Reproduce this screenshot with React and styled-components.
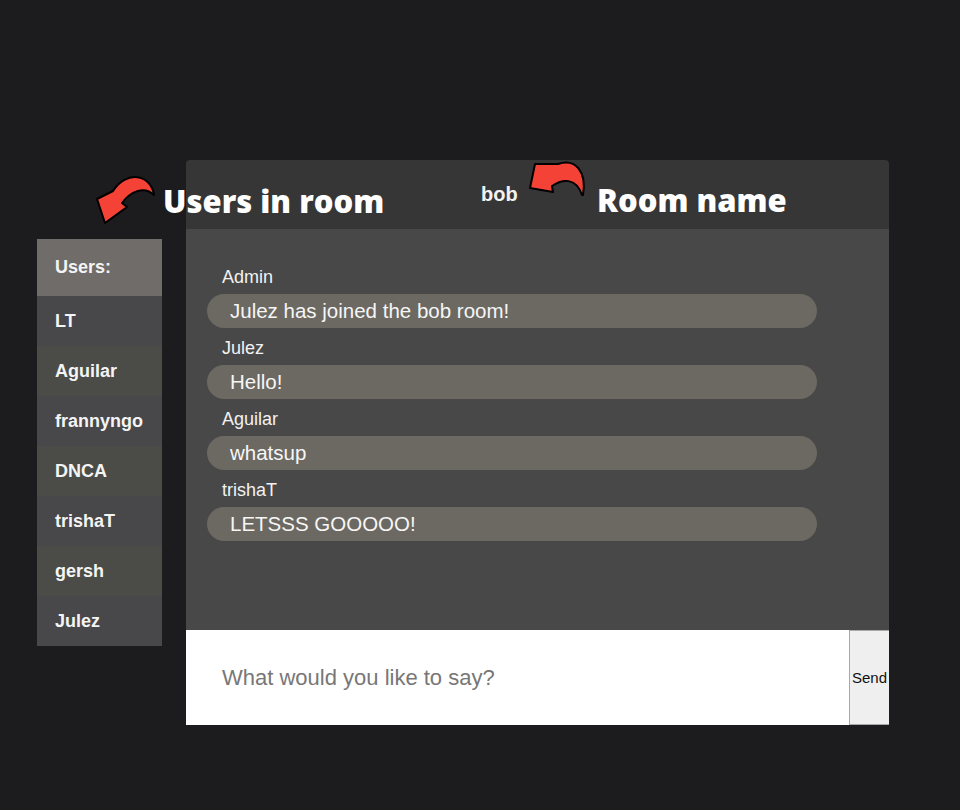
import React from 'react';
import styled, { createGlobalStyle } from 'styled-components';

const GlobalStyle = createGlobalStyle`
    html, body {
        margin: 0;
        padding: 0;
        background: #1c1c1e;
    }
    body {
        font-family: "Liberation Sans", Arial, sans-serif;
    }
`;

const Page = styled.div`
    position: relative;
    width: 960px;
    height: 810px;
    background: #1c1c1e;
    overflow: hidden;
`;

const Layout = styled.div`
    display: flex;
    align-items: flex-start;
    gap: 24px;
    padding: 160px 0 0 37px;
`;

const UsersPanel = styled.ul`
    list-style: none;
    margin: 79px 0 0;
    padding: 0;
    width: 125px;
    display: flex;
    flex-direction: column;
`;

const UserRow = styled.li`
    height: ${p => (p.$header ? 57 : 50)}px;
    display: flex;
    align-items: center;
    padding-left: 18px;
    background: ${p => (p.$header ? '#6f6c6a' : p.$alt ? '#4b4c47' : '#48474a')};
    color: #f4f4f4;
    font-weight: 700;
    font-size: 18px;
`;

const Chat = styled.section`
    width: 703px;
    display: flex;
    flex-direction: column;
    border-radius: 4px 4px 0 0;
    overflow: hidden;
`;

const RoomHeader = styled.header`
    height: 69px;
    background: #363636;
    display: flex;
    align-items: center;
    padding-left: 295px;
    color: #f2f2f2;
    font-weight: 700;
    font-size: 20px;
`;

const Messages = styled.div`
    height: 401px;
    box-sizing: border-box;
    background: #484848;
    padding: 38px 72px 0 21px;
    display: flex;
    flex-direction: column;
    gap: 10px;
`;

const Message = styled.div`
    display: flex;
    flex-direction: column;
    gap: 7px;
`;

const Author = styled.div`
    color: #f2f2f2;
    font-size: 18px;
    line-height: 20px;
    padding-left: 15px;
`;

const Bubble = styled.div`
    height: 34px;
    border-radius: 17px;
    background: #6c6962;
    color: #f6f6f6;
    font-size: 20.5px;
    display: flex;
    align-items: center;
    padding-left: 23px;
`;

const Composer = styled.form`
    height: 95px;
    display: flex;
    background: #ffffff;
    margin: 0;
`;

const Input = styled.input`
    flex: 1;
    border: none;
    outline: none;
    padding: 0 0 0 36px;
    font-family: "Liberation Sans", Arial, sans-serif;
    font-size: 22px;
    color: #333;
    background: #ffffff;
    &::placeholder {
        color: #777;
    }
`;

const SendButton = styled.button`
    width: 40px;
    padding: 0 0 0 2px;
    border: 1px solid #a8a8a8;
    border-right: none;
    background: #efefef;
    color: #111;
    font-family: "Liberation Sans", Arial, sans-serif;
    font-size: 15px;
    overflow: hidden;
    white-space: nowrap;
    text-align: left;
`;

const Note = styled.div`
    position: absolute;
    left: ${p => p.$x}px;
    top: ${p => p.$y}px;
    color: #ffffff;
    font-family: "Open Sans", "DejaVu Sans", sans-serif;
    font-weight: 800;
    font-size: 31px;
    white-space: nowrap;
`;

const Arrow = styled.svg`
    position: absolute;
    left: ${p => p.$x}px;
    top: ${p => p.$y}px;
`;

const users = ['LT', 'Aguilar', 'frannyngo', 'DNCA', 'trishaT', 'gersh', 'Julez'];

const messages = [
    { author: 'Admin', text: 'Julez has joined the bob room!' },
    { author: 'Julez', text: 'Hello!' },
    { author: 'Aguilar', text: 'whatsup' },
    { author: 'trishaT', text: 'LETSSS GOOOOO!' },
];

const App = () => {
    return (
        <Page>
            <GlobalStyle />
            <Layout>
                <UsersPanel>
                    <UserRow $header>Users:</UserRow>
                    {users.map((u, i) => (
                        <UserRow key={u} $alt={i % 2 === 1}>{u}</UserRow>
                    ))}
                </UsersPanel>
                <Chat>
                    <RoomHeader>bob</RoomHeader>
                    <Messages>
                        {messages.map(m => (
                            <Message key={m.author}>
                                <Author>{m.author}</Author>
                                <Bubble>{m.text}</Bubble>
                            </Message>
                        ))}
                    </Messages>
                    <Composer onSubmit={e => e.preventDefault()}>
                        <Input placeholder="What would you like to say?" />
                        <SendButton type="submit">Send</SendButton>
                    </Composer>
                </Chat>
            </Layout>

            {/* annotations drawn over the screenshot */}
            <Arrow $x={90} $y={170} width="70" height="60" viewBox="0 0 70 60">
                <path
                    d="M 64 25 C 61 4, 36 0, 23 21 L 7 29 L 15 53 L 37 37 L 32 33 C 40 22, 54 15, 64 25 Z"
                    fill="#f44336"
                    stroke="#000"
                    strokeWidth="2"
                    strokeLinejoin="round"
                />
            </Arrow>
            <Note $x={163} $y={180}>Users in room</Note>

            <Arrow $x={520} $y={155} width="75" height="50" viewBox="0 0 75 50">
                <path
                    d="M 63 40 C 67 16, 55 3, 38 9 L 15 9 L 10 33 L 33 37 L 32 31 C 42 24, 56 22, 62 40 Z"
                    fill="#f44336"
                    stroke="#000"
                    strokeWidth="2"
                    strokeLinejoin="round"
                />
            </Arrow>
            <Note $x={597} $y={179}>Room name</Note>
        </Page>
    );
};

export default App;
